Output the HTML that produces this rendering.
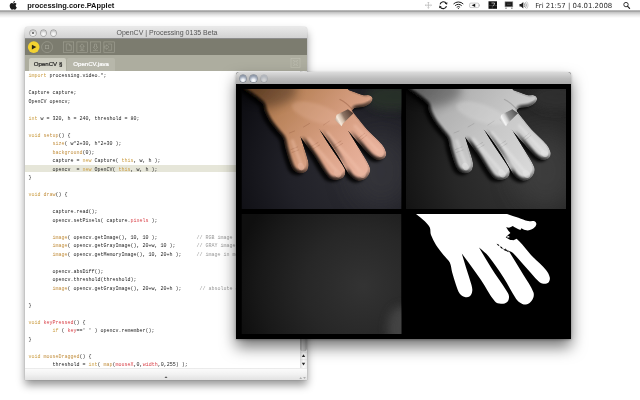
<!DOCTYPE html>
<html>
<head>
<meta charset="utf-8">
<title>processing.core.PApplet</title>
<style>
html,body{margin:0;padding:0;}
body{will-change:transform;width:640px;height:400px;background:#fff;position:relative;overflow:hidden;font-family:"Liberation Sans",sans-serif;}
.abs{position:absolute;}
#menubar{position:absolute;left:0;top:0;width:640px;height:18px;background:linear-gradient(#fff 0,#fff 9.8px,#c2c2c2 10.2px,#9b9b9b 11.2px,#c6c6c6 12.5px,#e7e7e7 15px,#fff 18px);z-index:1;}
#menubar .title{position:absolute;left:27.200px;top:0.600px;font-size:7.450px;font-weight:bold;color:#111;line-height:10px;}
#menubar .date{position:absolute;left:535.300px;top:0.500px;font-family:"DejaVu Sans","Liberation Sans",sans-serif;font-size:6.940px;color:#2e2e2e;line-height:10px;white-space:nowrap;}
#pwin{position:absolute;left:25px;top:27px;width:282.200px;height:353px;background:#fff;box-shadow:0 5px 9px rgba(0,0,0,0.42),0 0 1px rgba(0,0,0,0.5);border-radius:3px 3px 0 0;}
#pwin .tbar{position:absolute;left:0;top:0;width:282px;height:11px;background:linear-gradient(#e9e9e9,#d2d2d2);border-radius:3px 3px 0 0;border-bottom:0.5px solid #8c8c8c;}
#pwin .ttext{position:absolute;left:1px;top:0;width:282px;text-align:center;font-size:7px;line-height:12.400px;color:#555;}
.light{position:absolute;width:5.800px;height:5.800px;border-radius:50%;background:radial-gradient(circle at 50% 70%,#fbfbfb 0,#e4e4e4 45%,#b9b9b9 80%,#a2a2a2 100%);box-shadow:0 0 0 0.600px #8e8e8e;}
.glass{width:6.200px!important;height:6.200px!important;margin:0.200px;background:radial-gradient(circle at 50% 78%,#fff 0,#eef1f6 22%,#a3adbd 58%,#6f7a8c 100%)!important;box-shadow:0 0 0 0.500px #6a7484!important;}
#pwin .tool{position:absolute;left:0;top:11.5px;width:282px;height:16px;background:#7c7c6f;}
#pwin .tabs{position:absolute;left:0;top:27.5px;width:282px;height:16px;background:#adad9f;}
#pwin .tab{position:absolute;top:3px;height:13px;font-size:6.100px;line-height:11px;text-align:center;border-radius:2px 2px 0 0;}
#pwin .code{position:absolute;left:0;top:43.5px;width:276px;height:297.5px;background:#fff;overflow:hidden;}
#pwin pre{margin:0;position:absolute;left:3.500px;top:1.800px;font-family:"Liberation Mono",monospace;font-size:5px;line-height:8.5px;color:#262626;tab-size:8;-moz-tab-size:8;white-space:pre;}
#pwin .hl{position:absolute;left:0;top:94px;width:276px;height:7.800px;background:#e6e6d9;}
.k{color:#cb9d42;}
.f{color:#c39040;}
.r{color:#d9434a;}
.c{color:#9a9a9a;}
#pwin .sbar{position:absolute;left:275.100px;top:43.500px;width:7px;height:297.500px;background:linear-gradient(90deg,#dcdcdc,#fcfcfc 50%,#ececec);}
#pwin .bbar{position:absolute;left:0;top:341px;width:282px;height:12px;background:linear-gradient(#d9d9d9 0,#fbfbfb 8%,#f2f2f2 50%,#e2e2e2 100%);}
#awin{position:absolute;left:235.500px;top:72px;width:335px;height:267px;background:#000;box-shadow:0 8px 15px rgba(0,0,0,0.55),0 1px 3px rgba(0,0,0,0.3);border-radius:3px 3px 0 0;z-index:3;}
#awin .tbar{position:absolute;left:0;top:0;width:335px;height:12px;background:linear-gradient(#dcdcdc,#bcbcbc 55%,#ababab);border-radius:3px 3px 0 0;}
#awin svg{position:absolute;left:0;top:12px;}
</style>
</head>
<body>

<div id="menubar">
  <svg class="abs" style="left:8.300px;top:-0.300px" width="10.560" height="10.560" viewBox="0 0 24 24"><path fill="#1c1c1c" d="M18.710 19.500c-.830 1.240-1.710 2.450-3.050 2.470-1.340.030-1.770-.790-3.290-.790-1.530 0-2 .770-3.270.820-1.310.050-2.300-1.320-3.140-2.530C4.250 17 2.940 12.450 4.700 9.390c.870-1.520 2.430-2.480 4.120-2.510 1.280-.020 2.500.870 3.290.870.780 0 2.260-1.070 3.810-.910.650.030 2.470.260 3.640 1.980-.090.060-2.170 1.280-2.150 3.810.030 3.020 2.650 4.030 2.680 4.040-.030.070-.420 1.440-1.380 2.830M13 3.500c.730-.830 1.940-1.460 2.940-1.500.130 1.170-.340 2.350-1.040 3.190-.690.850-1.830 1.510-2.950 1.420-.150-1.150.410-2.350 1.050-3.110z"/></svg>
  <div class="title">processing.core.PApplet</div>
  <svg class="abs" style="left:420px;top:0" width="220" height="11" viewBox="420 0 220 11">
    <g fill="none" stroke="#b4b4b4" stroke-width="0.700"><path d="M425.200 5.200h6.400M428.400 2v6.400"/><path d="M426.200 4.300l-1 .9 1 .9M430.600 4.300l1 .9-1 .9M427.500 3l.9-1 .9 1M427.500 7.400l.9 1 .9-1" stroke-width="0.500"/></g>
    <g fill="none" stroke="#1e1e1e" stroke-width="1.150"><path d="M440.050 4.300A3.300 3.300 0 0 1 446.300 3.700"/><path d="M446.450 6.100A3.300 3.300 0 0 1 440.200 6.700"/></g>
    <path d="M447.400 2.200l-.3 2.600-2.300-1.200zM439.100 8.200l.3-2.600 2.300 1.200z" fill="#1e1e1e"/>
    <g fill="none" stroke="#1e1e1e" stroke-width="1" stroke-linecap="round"><path d="M453.800 3.700A6.600 6.600 0 0 1 463 3.700"/><path d="M455.400 5.400A4.300 4.300 0 0 1 461.400 5.400"/><path d="M457 7A2 2 0 0 1 459.800 7" stroke-width="0.900"/></g>
    <circle cx="458.400" cy="8.300" r="0.600" fill="#1e1e1e"/>
    <rect x="469.600" y="3.100" width="9.200" height="4.500" rx="1.200" fill="#fafafa" stroke="#a8a8a8" stroke-width="0.600"/>
    <path d="M479 4.500h.7v1.700h-.7z" fill="#a8a8a8"/>
    <path d="M471.600 5.350l3.600-1.700v3.400z" fill="#111"/>
    <rect x="488.500" y="1.300" width="8.500" height="7.500" fill="#111"/>
    <path d="M491.500 3h3v1l-1.500 2.200" fill="none" stroke="#ddd" stroke-width="0.700"/>
    <path d="M488.500 5.600h8.500M492.300 5.600v3.200" stroke="#888" stroke-width="0.350"/>
    <rect x="505" y="1.800" width="7.800" height="5" fill="#1a1a1a" stroke="#8a8a8a" stroke-width="0.600"/>
    <path d="M505.200 8.200h1.600M511 8.200h1.600" stroke="#555" stroke-width="0.800"/>
    <path d="M507 4.200h3.800" stroke="#777" stroke-width="0.500"/>
    <path d="M519.500 4h1.500l2.300-2.100v6.600l-2.300-2.100h-1.500z" fill="#1e1e1e"/>
    <g fill="none" stroke="#444" stroke-width="0.600" stroke-linecap="round"><path d="M524.400 3.600a2.400 2.400 0 0 1 0 3.200"/><path d="M525.600 2.600a4 4 0 0 1 0 5.200" stroke="#777"/><path d="M526.800 1.800a5.400 5.400 0 0 1 0 6.800" stroke="#aaa"/></g>
    <circle cx="626" cy="4.600" r="2.200" fill="none" stroke="#222" stroke-width="0.900"/>
    <path d="M627.600 6.300l2 2.100" stroke="#222" stroke-width="1.200" stroke-linecap="round"/>
  </svg>
  <div class="date">Fri 21:57 | 04.01.2008</div>
</div>

<div id="pwin">
  <div class="tbar"></div>
  <div class="ttext">OpenCV | Processing 0135 Beta</div>
  <div class="light" style="left:5.400px;top:2.900px"></div>
  <div class="light" style="left:15.500px;top:2.900px"></div>
  <div class="light" style="left:25.700px;top:2.900px"></div>
  <div class="abs" style="left:7.300px;top:4.800px;width:2px;height:2px;border-radius:50%;background:#555"></div>
  <div class="tool">
    <svg class="abs" style="left:0;top:0" width="282" height="16" viewBox="0 0 282 16">
      <circle cx="8.700" cy="8.100" r="5.800" fill="#f3d231"/>
      <path d="M6.900 5.700L11.300 8.100L6.900 10.500Z" fill="#2a2618"/>
      <g fill="none" stroke="#a3a396" stroke-width="0.600">
        <circle cx="22.100" cy="8.100" r="5.500"/>
        <rect x="20.500" y="6.500" width="3.200" height="3.200"/>
        <rect x="38.300" y="2.900" width="10.400" height="10.400"/>
        <rect x="51.900" y="2.900" width="10.400" height="10.400"/>
        <rect x="65.300" y="2.900" width="10.400" height="10.400"/>
        <rect x="78.900" y="2.900" width="10.400" height="10.400"/>
        <path d="M41.300 4.900h3.200l1.800 1.800v4.600h-5zM44.500 4.900v1.800h1.800"/>
        <path d="M57.100 4.800l2.300 2.600h-1.300v3h-2v-3h-1.300z"/>
        <path d="M54.600 11.600h5"/>
        <path d="M70.500 10.600l2.300-2.600h-1.300v-3h-2v3h-1.300z"/>
        <path d="M68 11.600h5"/>
        <path d="M84.100 8.100l-2.600-2.300v1.300h-2.200v2h2.200v1.300z"/>
        <path d="M83.100 5h3.500v6.200h-3.500"/>
      </g>
    </svg>
  </div>
  <div class="tabs">
    <div class="tab" style="left:3.500px;width:37.500px;background:linear-gradient(#cdcdc0,#d8d8cc);color:#222;-webkit-text-stroke:0.200px #222;text-indent:1.600px;">OpenCV §</div>
    <div class="tab" style="left:41.500px;width:48.500px;background:#b7b7aa;color:#fff;-webkit-text-stroke:0.200px #fff;text-indent:0.800px;">OpenCV.java</div>
    <svg class="abs" style="left:264px;top:2px" width="14" height="13" viewBox="0 0 14 13"><g fill="none" stroke="#c0c0b3" stroke-width="0.600"><rect x="2" y="1.500" width="9" height="9"/><circle cx="6.500" cy="6" r="1.800"/><path d="M4 3.500h1.500M7.500 3.500H9M4 8.500h1.500M7.500 8.500H9"/></g></svg>
  </div>
  <div class="code">
    <div class="hl"></div>
<pre><span class="k">import</span> processing.video.*;

Capture capture;
OpenCV opencv;

<span class="k">int</span> w = 320, h = 240, threshold = 80;

<span class="k">void</span> <span class="f">setup</span>() {
	<span class="f">size</span>( w*2+30, h*2+30 );
	<span class="f">background</span>(0);
	capture = <span class="k">new</span> Capture( <span class="k">this</span>, w, h );
	opencv  = <span class="k">new</span> OpenCV( <span class="k">this</span>, w, h );
}

<span class="k">void</span> <span class="f">draw</span>() {

	capture.read();
	opencv.setPixels( capture.<span class="r">pixels</span> );

	<span class="f">image</span>( opencv.getImage(), 10, 10 );		<span class="c">// RGB image</span>
	<span class="f">image</span>( opencv.getGrayImage(), 20+w, 10 );	<span class="c">// GRAY image</span>
	<span class="f">image</span>( opencv.getMemoryImage(), 10, 20+h );	<span class="c">// image in memory</span>

	opencv.absDiff();
	opencv.threshold(threshold);
	<span class="f">image</span>( opencv.getGrayImage(), 20+w, 20+h );	 <span class="c">// absolute difference image</span>

}

<span class="k">void</span> <span class="r">keyPressed</span>() {
	<span class="k">if</span> ( <span class="r">key</span>==' ' ) opencv.remember();
}

<span class="k">void</span> <span class="f">mouseDragged</span>() {
	threshold = <span class="k">int</span>( <span class="f">map</span>(<span class="r">mouseX</span>,0,<span class="r">width</span>,0,255) );</pre>
  </div>
  <div class="sbar"><svg class="abs" style="left:0;top:0" width="7" height="297.500" viewBox="0 0 7 297.500">
    <defs><linearGradient id="thg" x1="0" y1="0" x2="1" y2="0"><stop offset="0" stop-color="#a9a9a9"/><stop offset="0.350" stop-color="#d4d4d4"/><stop offset="0.700" stop-color="#c4c4c4"/><stop offset="1" stop-color="#a2a2a2"/></linearGradient></defs>
    <rect x="0.200" y="120" width="6.600" height="160.500" rx="3.300" fill="url(#thg)"/>
    <path d="M0 281.200h7M0 288.700h7" stroke="#cfcfcf" stroke-width="0.400"/>
    <path d="M3.500 283.300l1.700 2.600h-3.400z" fill="#2b2b2b"/>
    <path d="M3.500 294.400l1.700-2.600h-3.400z" fill="#2b2b2b"/>
  </svg></div>
  <div class="bbar"><svg class="abs" style="left:0;top:0" width="282" height="12" viewBox="0 0 282 12">
    <path d="M141 8.300l1.500 1.800h-3z" fill="#555"/>
    <path d="M275.700 9.200l1.400 1.600h-2.800z" fill="#9a9a9a"/>
    <path d="M279.500 10.800l1.400-1.600h-2.800z" fill="#9a9a9a"/>
  </svg></div>
</div>

<div id="awin">
  <div class="tbar"></div>
  <div class="light glass" style="left:4.200px;top:3.200px"></div>
  <div class="light glass" style="left:14.700px;top:3.200px"></div>
  <div class="light glass" style="left:25px;top:3.200px;opacity:0.4"></div>
  <svg width="335" height="255" viewBox="0 0 335 255">
    <defs>
      <path id="hand" d="M10.0 0.0C12.9 2.4 16.0 4.6 18.8 7.2C20.7 9.1 22.6 11.1 23.8 13.5C24.8 15.8 24.1 18.6 25.0 21.0C26.3 24.5 28.0 27.8 30.0 31.0C32.2 34.5 34.9 37.7 37.5 41.0C39.5 43.6 42.3 45.6 43.8 48.5C45.3 51.6 45.3 55.2 46.2 58.5C47.4 62.7 48.6 66.9 50.0 71.0C51.1 74.0 51.9 77.2 53.8 79.8C54.9 81.4 56.8 82.5 58.8 83.0C60.4 83.4 62.4 83.3 63.8 82.2C65.2 81.1 66.0 79.1 66.2 77.2C66.6 75.2 66.0 73.0 65.5 71.0C63.9 65.1 61.8 59.3 60.0 53.5C58.6 48.8 57.2 44.2 55.8 39.5C58.0 42.5 60.3 45.5 62.5 48.5C66.7 54.3 71.0 60.1 75.0 66.0C79.7 73.0 83.3 80.8 88.8 87.2C90.2 89.0 92.8 89.6 95.0 89.8C97.2 89.9 99.7 89.5 101.2 88.0C102.7 86.6 103.2 84.2 103.0 82.2C102.8 80.0 101.2 78.0 100.0 76.0C95.2 68.4 89.8 61.1 85.0 53.5C80.8 46.9 77.0 40.2 73.0 33.5C76.2 36.4 79.8 38.9 82.5 42.2C88.0 49.0 92.8 56.2 97.5 63.5C102.0 70.4 105.5 77.9 110.0 84.8C111.0 86.2 112.2 87.6 113.8 88.5C115.6 89.6 117.9 90.9 120.0 90.5C122.5 90.0 124.9 88.2 126.2 86.0C127.6 83.9 128.3 80.9 127.5 78.5C125.3 72.2 120.9 66.8 117.5 61.0C112.6 52.8 107.5 44.7 102.5 36.5C104.2 37.5 106.1 38.1 107.5 39.5C112.0 43.9 115.8 48.9 120.0 53.5C124.1 58.1 128.0 63.0 132.5 67.2C133.9 68.5 135.7 69.5 137.5 69.8C139.2 70.0 141.3 69.7 142.5 68.5C143.7 67.3 144.1 65.2 143.8 63.5C143.2 60.8 141.8 58.1 140.0 56.0C135.5 50.6 129.8 46.2 125.0 41.0C121.9 37.6 119.3 33.8 116.3 30.4C114.5 28.4 112.5 26.6 110.6 24.7C109.6 25.2 108.5 25.8 107.5 26.3C106.5 26.2 105.4 26.2 104.4 26.1C102.8 25.2 101.3 24.2 99.7 23.3C100.5 22.5 101.2 21.8 102.0 21.0C102.8 20.3 103.6 19.7 104.4 19.0C103.7 18.2 102.9 17.3 102.2 16.5C101.5 15.4 100.8 14.4 100.1 13.3C101.1 13.5 102.0 13.6 103.0 13.8C104.3 13.2 105.5 12.5 106.8 11.9C107.7 12.5 108.7 13.2 109.6 13.8C111.2 14.6 112.8 15.3 114.4 16.1C114.7 15.5 115.0 14.8 115.3 14.2C116.6 14.8 117.7 15.8 119.1 16.1C120.7 16.4 122.4 16.6 123.9 16.1C125.6 15.6 127.3 14.6 128.6 13.3C129.6 12.3 130.5 10.9 130.3 9.5C130.1 8.3 128.8 7.4 127.7 7.1C125.9 6.6 123.9 7.5 122.0 7.1C118.7 6.4 115.7 4.9 112.5 3.8C108.7 2.5 104.9 1.3 101.1 0.0Z"/>
      <g id="handp"><path d="M10.0 0.0C12.9 2.4 16.0 4.6 18.8 7.2C20.7 9.1 22.6 11.1 23.8 13.5C24.8 15.8 24.1 18.6 25.0 21.0C26.3 24.5 28.0 27.8 30.0 31.0C32.2 34.5 34.9 37.7 37.5 41.0C39.5 43.6 42.3 45.6 43.8 48.5C45.3 51.6 45.3 55.2 46.2 58.5C47.4 62.7 48.6 66.9 50.0 71.0C51.1 74.0 51.9 77.2 53.8 79.8C54.9 81.4 56.8 82.5 58.8 83.0C60.4 83.4 62.4 83.3 63.8 82.2C65.2 81.1 66.0 79.1 66.2 77.2C66.6 75.2 66.0 73.0 65.5 71.0C63.9 65.1 61.8 59.3 60.0 53.5C58.6 48.8 57.2 44.2 55.8 39.5C58.0 42.5 60.3 45.5 62.5 48.5C66.7 54.3 71.0 60.1 75.0 66.0C79.7 73.0 83.3 80.8 88.8 87.2C90.2 89.0 92.8 89.6 95.0 89.8C97.2 89.9 99.7 89.5 101.2 88.0C102.7 86.6 103.2 84.2 103.0 82.2C102.8 80.0 101.2 78.0 100.0 76.0C95.2 68.4 89.8 61.1 85.0 53.5C80.8 46.9 77.0 40.2 73.0 33.5C76.2 36.4 79.8 38.9 82.5 42.2C88.0 49.0 92.8 56.2 97.5 63.5C102.0 70.4 105.5 77.9 110.0 84.8C111.0 86.2 112.2 87.6 113.8 88.5C115.6 89.6 117.9 90.9 120.0 90.5C122.5 90.0 124.9 88.2 126.2 86.0C127.6 83.9 128.3 80.9 127.5 78.5C125.3 72.2 120.9 66.8 117.5 61.0C112.6 52.8 107.5 44.7 102.5 36.5C104.2 37.5 106.1 38.1 107.5 39.5C112.0 43.9 115.8 48.9 120.0 53.5C124.1 58.1 128.0 63.0 132.5 67.2C133.9 68.5 135.7 69.5 137.5 69.8C139.2 70.0 141.3 69.7 142.5 68.5C143.7 67.3 144.1 65.2 143.8 63.5C143.2 60.8 141.8 58.1 140.0 56.0C135.5 50.6 129.8 46.2 125.0 41.0C121.9 37.6 119.2 34.0 116.3 30.4C114.3 28.0 112.2 25.6 110.5 23.0C110.0 22.3 110.2 21.3 110.0 20.5C111.2 19.7 112.1 18.5 113.5 18.0C115.3 17.4 117.2 17.6 119.1 17.3C120.7 17.1 122.4 17.0 123.9 16.4C125.6 15.7 127.3 14.7 128.6 13.3C129.5 12.3 130.5 10.9 130.3 9.5C130.1 8.3 128.8 7.4 127.7 7.1C125.9 6.6 123.9 7.5 122.0 7.1C118.7 6.4 115.7 4.9 112.5 3.8C108.7 2.5 104.9 1.3 101.1 0.0Z"/><path d="M3.500 -12H106V1.500H11.500Q9 5 16 8L24.500 15Q17 7 9.500 3.500Q5 1 3.500 -1Z"/></g>
      <g id="handw"><use href="#handp"/><use href="#handp" transform="translate(-1.800,0.500)"/></g>
      <clipPath id="cp"><rect width="160" height="120"/></clipPath>
      <clipPath id="hc"><rect x="-5" y="-5" width="170" height="130"/></clipPath>
      <filter id="b1" x="-20%" y="-20%" width="140%" height="140%"><feGaussianBlur stdDeviation="0.450"/></filter>
      <filter id="b07" x="-20%" y="-20%" width="140%" height="140%"><feGaussianBlur stdDeviation="0.800"/></filter>
      <filter id="b2" x="-20%" y="-20%" width="140%" height="140%"><feGaussianBlur stdDeviation="1.800"/></filter>
      <filter id="b4" x="-50%" y="-50%" width="200%" height="200%"><feGaussianBlur stdDeviation="5"/></filter>
      <filter id="b8" x="-60%" y="-60%" width="220%" height="220%"><feGaussianBlur stdDeviation="12"/></filter>
      <filter id="lit" x="-5%" y="-5%" width="110%" height="110%" color-interpolation-filters="sRGB">
        <feGaussianBlur in="SourceAlpha" stdDeviation="2.200" result="h"/>
        <feDiffuseLighting in="h" surfaceScale="5" diffuseConstant="1.130" lighting-color="#ffffff" result="l">
          <feDistantLight azimuth="315" elevation="66"/>
        </feDiffuseLighting>
        <feComposite in="l" in2="SourceGraphic" operator="arithmetic" k1="1" k2="0" k3="0" k4="0" result="m"/>
        <feComposite in="m" in2="SourceAlpha" operator="in"/>
      </filter>
      <radialGradient id="bgc" gradientUnits="userSpaceOnUse" cx="115" cy="80" r="135">
        <stop offset="0" stop-color="#2d2d33"/><stop offset="0.500" stop-color="#212128"/><stop offset="1" stop-color="#0c0c11"/>
      </radialGradient>
      <radialGradient id="bgg" gradientUnits="userSpaceOnUse" cx="115" cy="80" r="135">
        <stop offset="0" stop-color="#353535"/><stop offset="0.500" stop-color="#272727"/><stop offset="1" stop-color="#0e0e0e"/>
      </radialGradient>
      <radialGradient id="bgm" gradientUnits="userSpaceOnUse" cx="122" cy="72" r="128">
        <stop offset="0" stop-color="#333333"/><stop offset="0.450" stop-color="#272727"/><stop offset="0.800" stop-color="#191919"/><stop offset="1" stop-color="#0f0f0f"/>
      </radialGradient>
      <linearGradient id="ringg" gradientUnits="userSpaceOnUse" x1="94" y1="31" x2="110" y2="22">
        <stop offset="0" stop-color="#bdbdbd"/><stop offset="0.150" stop-color="#f6f6f6"/><stop offset="0.350" stop-color="#cfcfcf"/><stop offset="0.500" stop-color="#8c8c8c"/><stop offset="0.750" stop-color="#727272"/><stop offset="1" stop-color="#505050"/>
      </linearGradient>
      <linearGradient id="ringc" gradientUnits="userSpaceOnUse" x1="94" y1="31" x2="110" y2="22">
        <stop offset="0" stop-color="#c2aa98"/><stop offset="0.150" stop-color="#f6eadc"/><stop offset="0.350" stop-color="#d2bba8"/><stop offset="0.500" stop-color="#8e7565"/><stop offset="0.750" stop-color="#70574a"/><stop offset="1" stop-color="#523a30"/>
      </linearGradient>
      <linearGradient id="skin" gradientUnits="userSpaceOnUse" x1="15" y1="0" x2="125" y2="90">
        <stop offset="0" stop-color="#8a5a34"/><stop offset="0.250" stop-color="#b9835a"/><stop offset="0.550" stop-color="#d29a7b"/><stop offset="0.800" stop-color="#e2aa92"/><stop offset="1" stop-color="#eab49f"/>
      </linearGradient>
      <linearGradient id="gray" gradientUnits="userSpaceOnUse" x1="15" y1="0" x2="125" y2="90">
        <stop offset="0" stop-color="#888888"/><stop offset="0.250" stop-color="#b2b2b2"/><stop offset="0.600" stop-color="#c8c8c8"/><stop offset="1" stop-color="#dadada"/>
      </linearGradient>
    </defs>
    <rect width="335" height="255" fill="#000"/>
    <g transform="translate(5.500,5)" clip-path="url(#cp)">
      <rect width="160" height="120" fill="url(#bgc)"/>
      <ellipse cx="140" cy="82" rx="32" ry="38" fill="#3a3a40" opacity="0.600" filter="url(#b8)"/>
      <ellipse cx="150" cy="8" rx="26" ry="14" fill="#2c3429" opacity="0.8" filter="url(#b4)"/>
      <use href="#handw" fill="#000" stroke="#000" stroke-width="1.700" opacity="0.850" transform="translate(-3.500,1.800)" filter="url(#b2)"/>
      <g filter="url(#b1)">
        <use href="#handw" fill="url(#skin)" stroke="url(#skin)" stroke-width="1.700" stroke-linejoin="round" filter="url(#lit)"/>
        <g clip-path="url(#hc)">
          <g fill="none" stroke="#7a4028" stroke-width="0.700" opacity="0.320" stroke-linecap="round">
            <path d="M49.500 60.500l6.500-2.500M50.500 63.500l6.500-2.500"/>
            <path d="M69 58l7.500-4.500M70.500 60.500l7.500-4.500"/>
            <path d="M91.500 57l8-5M93 59.500l8-5"/>
            <path d="M116 50l7-5.500M117.800 52l7-5.500"/>
            <path d="M48 44l5-2M62 38l6-3.500M82 36l6-4"/>
            <path d="M98.500 10.500Q104 13 110.500 20" stroke-width="1.300" opacity="1.600"/>
          </g>
          <g fill="none" stroke="#f6c8b2" stroke-width="3.200" stroke-linecap="round" opacity="0.380" filter="url(#b07)">
            <path d="M51 52L59.500 75M67.500 50L95 82M86 44L119.500 83.500M113.500 37L137 62.500"/>
          </g>
          <ellipse cx="75" cy="24" rx="26" ry="9" fill="#f6c8b2" opacity="0.220" transform="rotate(18 75 24)" filter="url(#b2)"/>
          <g fill="#e8b6a0" opacity="0.550">
            <ellipse cx="59.500" cy="77.500" rx="3.800" ry="3" transform="rotate(65 59.500 77.500)"/>
            <ellipse cx="96" cy="84.500" rx="4.200" ry="3.200" transform="rotate(55 96 84.500)"/>
            <ellipse cx="120.500" cy="85" rx="4.200" ry="3.200" transform="rotate(55 120.500 85)"/>
            <ellipse cx="138.500" cy="64.500" rx="3.800" ry="3" transform="rotate(45 138.500 64.500)"/>
          </g>
          <ellipse cx="22" cy="2" rx="34" ry="16" fill="#000" opacity="0.280" filter="url(#b4)"/>
        </g>
      </g>
      <g filter="url(#b1)">
        <polygon points="95.200,25.800 106.400,20.200 112,24.200 101.600,34.600 100,37.200 93.600,31" fill="url(#ringc)"/>
      </g>
    </g>
    <g transform="translate(170,5)" clip-path="url(#cp)">
      <rect width="160" height="120" fill="url(#bgg)"/>
      <ellipse cx="140" cy="82" rx="32" ry="38" fill="#444444" opacity="0.600" filter="url(#b8)"/>
      <ellipse cx="150" cy="8" rx="26" ry="14" fill="#303030" opacity="0.8" filter="url(#b4)"/>
      <use href="#handw" fill="#000" stroke="#000" stroke-width="1.700" opacity="0.850" transform="translate(-3.500,1.800)" filter="url(#b2)"/>
      <g filter="url(#b1)">
        <use href="#handw" fill="url(#gray)" stroke="url(#gray)" stroke-width="1.700" stroke-linejoin="round" filter="url(#lit)"/>
        <g clip-path="url(#hc)">
          <g fill="none" stroke="#6a6a6a" stroke-width="0.700" opacity="0.320" stroke-linecap="round">
            <path d="M49.500 60.500l6.500-2.500M50.500 63.500l6.500-2.500"/>
            <path d="M69 58l7.500-4.500M70.500 60.500l7.500-4.500"/>
            <path d="M91.500 57l8-5M93 59.500l8-5"/>
            <path d="M116 50l7-5.500M117.800 52l7-5.500"/>
            <path d="M48 44l5-2M62 38l6-3.500M82 36l6-4"/>
            <path d="M98.500 10.500Q104 13 110.500 20" stroke-width="1.300" opacity="1.600"/>
          </g>
          <g fill="none" stroke="#f0f0f0" stroke-width="3.200" stroke-linecap="round" opacity="0.380" filter="url(#b07)">
            <path d="M51 52L59.500 75M67.500 50L95 82M86 44L119.500 83.500M113.500 37L137 62.500"/>
          </g>
          <ellipse cx="75" cy="24" rx="26" ry="9" fill="#f0f0f0" opacity="0.220" transform="rotate(18 75 24)" filter="url(#b2)"/>
          <g fill="#e6e6e6" opacity="0.550">
            <ellipse cx="59.500" cy="77.500" rx="3.800" ry="3" transform="rotate(65 59.500 77.500)"/>
            <ellipse cx="96" cy="84.500" rx="4.200" ry="3.200" transform="rotate(55 96 84.500)"/>
            <ellipse cx="120.500" cy="85" rx="4.200" ry="3.200" transform="rotate(55 120.500 85)"/>
            <ellipse cx="138.500" cy="64.500" rx="3.800" ry="3" transform="rotate(45 138.500 64.500)"/>
          </g>
          <ellipse cx="22" cy="2" rx="34" ry="16" fill="#000" opacity="0.280" filter="url(#b4)"/>
        </g>
      </g>
      <g filter="url(#b1)">
        <polygon points="95.200,25.800 106.400,20.200 112,24.200 101.600,34.600 100,37.200 93.600,31" fill="url(#ringg)"/>
      </g>
    </g>
    <g transform="translate(5.500,130)" clip-path="url(#cp)">
      <rect width="160" height="120" fill="url(#bgm)"/>
      <ellipse cx="160" cy="114" rx="14" ry="22" fill="#505050" opacity="0.700" filter="url(#b4)"/>
    </g>
    <g transform="translate(170,130)" clip-path="url(#cp)">
      <rect width="160" height="120" fill="#000"/>
      <use href="#hand" fill="#fff"/>
      <path d="M90.600 29.700l1.800.6 1.200 1.900 2.300.9.900 1.500 2.400 1 .400-1.400 1.200 2 1.900.500-.200 1.500-2.200-1.200-1.700-.400-1.300-1.600-2.200-.800-1.400-1.900-1.700-.700z" fill="#000"/>
      <path d="M100.800 22.400l2.200-.3.600 1.200-2 .5z" fill="#fff"/>
    </g>
  </svg>
</div>

</body>
</html>
